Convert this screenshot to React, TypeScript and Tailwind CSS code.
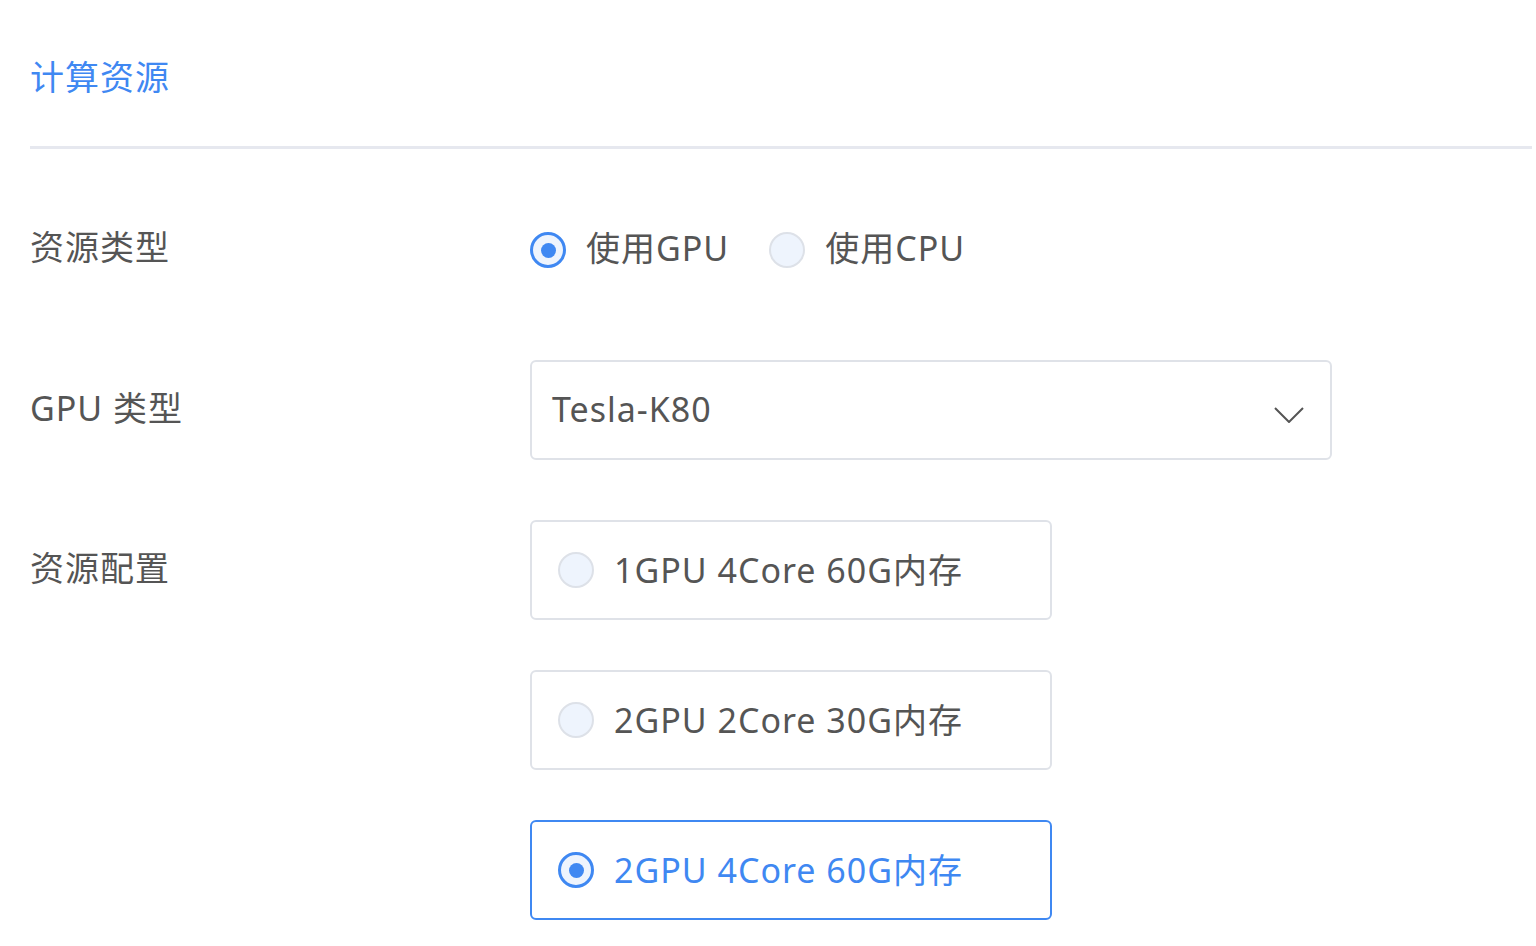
import React from "react";

const font = { fontFamily: '"Noto Sans", "Noto Sans CJK SC", sans-serif' };

const Radio: React.FC<{ checked?: boolean }> = ({ checked }) => (
  <span
    className={
      "flex h-[36px] w-[36px] shrink-0 items-center justify-center rounded-full bg-[#eef4fd] " +
      (checked ? "border-[3px] border-[#3f88f2]" : "border-2 border-[#dde1e8]")
    }
  >
    {checked && <span className="h-[15px] w-[15px] rounded-full bg-[#3f88f2]" />}
  </span>
);

const options = [
  { label: "1GPU 4Core 60G内存", checked: false },
  { label: "2GPU 2Core 30G内存", checked: false },
  { label: "2GPU 4Core 60G内存", checked: true },
];

export default function App() {
  return (
    <div className="min-h-screen bg-white pl-[30px] tracking-[1px]" style={font}>
      <h1 className="pt-[56px] text-[34px] leading-[42px] text-[#3f88f2]">计算资源</h1>
      <div className="mr-[4px] mt-[48px] h-[3px] bg-[#e6e8ef]" />

      <div className="mt-[51px] flex flex-col gap-[60px] text-[34px] leading-[42px] text-[#555]">
        <div className="flex h-[100px] items-center">
          <div className="w-[500px] shrink-0 pb-[6px]">资源类型</div>
          <div className="flex items-center">
            <label className="flex items-center gap-[20px]">
              <Radio checked />
              <span className="pb-[4px]">使用GPU</span>
            </label>
            <label className="ml-[40px] flex items-center gap-[20px]">
              <Radio />
              <span className="pb-[4px]">使用CPU</span>
            </label>
          </div>
        </div>

        <div className="flex">
          <div className="flex h-[100px] w-[500px] shrink-0 items-center pb-[4px]">GPU 类型</div>
          <div className="flex h-[100px] w-[802px] items-center justify-between rounded-[6px] border-2 border-[#dfe2e8] pl-[20px] pr-[26px]">
            <span className="pb-[2px]">Tesla-K80</span>
            <svg width="30" height="16" viewBox="0 0 30 16" fill="none" className="mt-[10px]">
              <path d="M1 1l14 14L29 1" stroke="#555" strokeWidth="2" />
            </svg>
          </div>
        </div>

        <div className="flex">
          <div className="flex h-[100px] w-[500px] shrink-0 items-center pb-[4px]">资源配置</div>
          <div className="flex flex-col gap-[50px]">
            {options.map((o) => (
              <div
                key={o.label}
                className={
                  "flex h-[100px] w-[522px] items-center gap-[20px] rounded-[6px] border-2 pl-[26px] " +
                  (o.checked ? "border-[#3f88f2] text-[#3f88f2]" : "border-[#dfe2e8]")
                }
              >
                <Radio checked={o.checked} />
                <span>{o.label}</span>
              </div>
            ))}
          </div>
        </div>
      </div>
    </div>
  );
}
